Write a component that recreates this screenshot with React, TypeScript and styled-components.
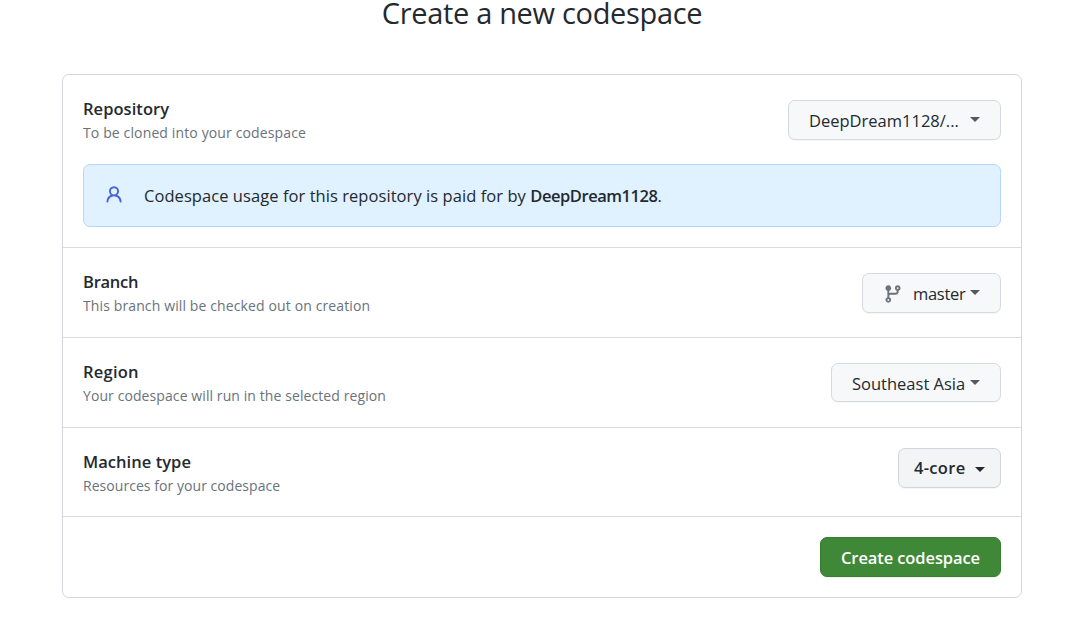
import React from 'react';
import styled, { createGlobalStyle } from 'styled-components';

const GlobalStyle = createGlobalStyle`
  * { box-sizing: border-box; }
  body {
    margin: 0;
    background: #fff;
    color: #24292f;
    font-family: "Open Sans", "Noto Sans", sans-serif;
    font-size: 17px;
    overflow: hidden;
  }
`;

const Page = styled.main`
  width: 960px;
  margin: 0 auto;
`;

const Heading = styled.h1`
  margin: 0;
  height: 74px;
  font-size: 29px;
  font-weight: 400;
  line-height: 25px;
  letter-spacing: -0.32px;
  text-align: center;
  white-space: nowrap;
`;

const Card = styled.div`
  border: 1px solid #d3d6de;
  border-radius: 7px;
`;

const Section = styled.section<{ $height: number }>`
  height: ${(p) => p.$height}px;
  padding: 20px;
  border-bottom: 1px solid #d8dbe0;
`;

const Row = styled.div`
  display: flex;
  justify-content: space-between;
  align-items: flex-start;
`;

const Labels = styled.div`
  height: 49px;
  padding-top: 1px;
`;

const Name = styled.div<{ $track?: number }>`
  font-size: 16.5px;
  font-weight: 600;
  line-height: 26px;
  letter-spacing: ${(p) => p.$track ?? 0}px;
  white-space: nowrap;
`;

const Hint = styled.div<{ $track?: number }>`
  color: #6a727b;
  font-size: 14px;
  line-height: 22px;
  letter-spacing: ${(p) => p.$track ?? 0}px;
  white-space: nowrap;
`;

const Select = styled.button<{ $width: number; $height?: number; $top?: number; $strong?: boolean }>`
  display: flex;
  align-items: center;
  width: ${(p) => p.$width}px;
  height: ${(p) => p.$height ?? 40}px;
  margin: ${(p) => p.$top ?? 5}px 0 0;
  padding: 0 ${(p) => (p.$strong ? 15 : 20)}px;
  border: 1px solid ${(p) => (p.$strong ? '#d2d4d7' : '#d6d9dd')};
  border-radius: 7px;
  background: ${(p) => (p.$strong ? '#f3f4f6' : '#f6f8fa')};
  box-shadow: 0 1px 0 rgba(27, 31, 36, 0.04);
  color: #24292f;
  font: ${(p) => (p.$strong ? 600 : 400)} 16.5px "Open Sans", "Noto Sans", sans-serif;
  white-space: nowrap;
`;

const Value = styled.span<{ $track?: number; $raise?: number }>`
  margin-bottom: ${(p) => p.$raise ?? 0}px;
  letter-spacing: ${(p) => p.$track ?? 0}px;
`;

const Caret = styled.span<{ $strong?: boolean }>`
  margin-left: auto;
  margin-top: ${(p) => (p.$strong ? 2 : -1)}px;
  border: 5px solid transparent;
  border-top-color: ${(p) => (p.$strong ? '#24292f' : '#55595e')};
  border-bottom: 0;
`;

const BranchIcon = styled.svg`
  flex: none;
  margin: 2px 10px 0 0;
  fill: #6a727b;
`;

const Notice = styled.div`
  display: flex;
  align-items: center;
  height: 63px;
  margin-top: 20px;
  padding: 0 20px;
  border: 1px solid #b6d6fe;
  border-radius: 7px;
  background: #e0f1ff;
`;

const PersonIcon = styled.svg`
  flex: none;
  margin: 0 20px 2px 0;
  fill: #4563dc;
`;

const NoticeText = styled.p`
  margin: 0;
  font-size: 16.5px;
  letter-spacing: 0.06px;
  white-space: nowrap;
`;

const Payer = styled.strong`
  font-weight: 600;
  letter-spacing: -0.45px;
`;

const Footer = styled.footer`
  display: flex;
  justify-content: flex-end;
  padding: 20px;
`;

const CreateButton = styled.button`
  width: 181px;
  height: 40px;
  padding: 0;
  border: 1px solid #397d33;
  border-radius: 7px;
  background: #3f8838;
  box-shadow: 0 1px 0 rgba(27, 31, 36, 0.06);
  color: #fff;
  font: 600 16.5px "Open Sans", "Noto Sans", sans-serif;
  letter-spacing: -0.1px;
  white-space: nowrap;
`;

export default function App() {
  return (
    <>
      <GlobalStyle />
      <Page>
        <Heading>Create a new codespace</Heading>
        <Card>
          <Section $height={173}>
            <Row>
              <Labels>
                <Name $track={0.05}>Repository</Name>
                <Hint $track={0.13}>To be cloned into your codespace</Hint>
              </Labels>
              <Select $width={213}>
                <Value>DeepDream1128/...</Value>
                <Caret />
              </Select>
            </Row>
            <Notice>
              <PersonIcon width="20" height="20" viewBox="0 0 16 16">
                <path d="M10.561 8.073a6.005 6.005 0 0 1 3.432 5.142.75.75 0 1 1-1.498.07 4.5 4.5 0 0 0-8.99 0 .75.75 0 0 1-1.498-.07 6.004 6.004 0 0 1 3.431-5.142 3.999 3.999 0 1 1 5.123 0ZM10.5 5a2.5 2.5 0 1 0-5 0 2.5 2.5 0 0 0 5 0Z" />
              </PersonIcon>
              <NoticeText>
                Codespace usage for this repository is paid for by <Payer>DeepDream1128</Payer>.
              </NoticeText>
            </Notice>
          </Section>
          <Section $height={90}>
            <Row>
              <Labels>
                <Name $track={-0.25}>Branch</Name>
                <Hint $track={0.12}>This branch will be checked out on creation</Hint>
              </Labels>
              <Select $width={139}>
                <BranchIcon width="20" height="20" viewBox="0 0 16 16">
                  <path d="M11.75 2.5a.75.75 0 100 1.5.75.75 0 000-1.5zm-2.25.75a2.25 2.25 0 113 2.122V6A2.5 2.5 0 0110 8.5H6a1 1 0 00-1 1v1.128a2.251 2.251 0 11-1.5 0V5.372a2.25 2.25 0 111.5 0v1.836A2.492 2.492 0 016 7h4a1 1 0 001-1v-.628A2.25 2.25 0 019.5 3.25zM4.25 12a.75.75 0 100 1.5.75.75 0 000-1.5zM3.5 3.25a.75.75 0 111.5 0 .75.75 0 01-1.5 0z" />
                </BranchIcon>
                <Value $track={-0.3}>master</Value>
                <Caret />
              </Select>
            </Row>
          </Section>
          <Section $height={90}>
            <Row>
              <Labels>
                <Name $track={0.25}>Region</Name>
                <Hint $track={0.09}>Your codespace will run in the selected region</Hint>
              </Labels>
              <Select $width={170} $height={39}>
                <Value $raise={-1}>Southeast Asia</Value>
                <Caret />
              </Select>
            </Row>
          </Section>
          <Section $height={89}>
            <Row>
              <Labels>
                <Name $track={0.04}>Machine type</Name>
                <Hint $track={0.05}>Resources for your codespace</Hint>
              </Labels>
              <Select $width={103} $top={0} $strong>
                <Value $track={0.3} $raise={2}>4-core</Value>
                <Caret $strong />
              </Select>
            </Row>
          </Section>
          <Footer>
            <CreateButton>Create codespace</CreateButton>
          </Footer>
        </Card>
      </Page>
    </>
  );
}
